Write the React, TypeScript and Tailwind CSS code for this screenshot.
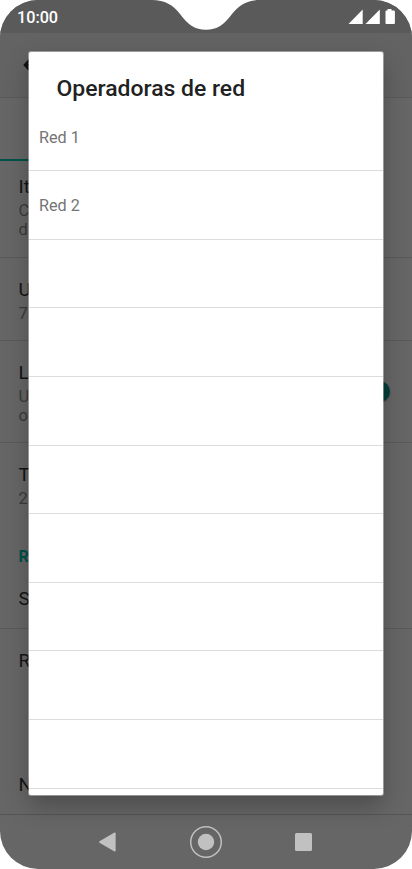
import { clsx } from 'clsx';

type Setting = {
  title: string;
  lines: string[];
  className: string;
};

const settings: Setting[] = [
  { title: 'It', lines: ['C', 'd'], className: 'h-[97px] pt-[14px] border-b' },
  { title: 'U', lines: ['7'], className: 'h-[83px] pt-5 border-b' },
  { title: 'L', lines: ['U', 'ot'], className: 'h-[102px] pt-5 border-b' },
  { title: 'T', lines: ['2'], className: 'h-[99px] pt-5' },
];

const networks = ['Red 1', 'Red 2', '', '', '', '', '', '', '', ''];

const SettingRow = ({ title, lines, className }: Setting) => (
  <div className={clsx('shrink-0 border-[#5a5a5a] pl-[18.5px]', className)}>
    <p className="text-[19px] leading-6 text-[#141414]">{title}</p>
    <div className="pt-[1.5px] text-[16.5px] leading-[19px] text-[#3b3b3b]">
      {lines.map(line => (
        <p key={line}>{line}</p>
      ))}
    </div>
  </div>
);

const StatusBar = () => (
  <div className="flex h-[33px] shrink-0 justify-between bg-[#5a5a5a] pl-[17px] pr-[16px]">
    <span className="pt-[6px] text-[16.2px] font-medium leading-6 text-white">10:00</span>
    <svg width="48" height="33" viewBox="0 0 48 33" fill="#fff">
      <path d="M0.500 24L14.700 9.500V24z" />
      <path d="M17.500 24L31.800 9.500V24z" />
      <path d="M39.500 9h4v1.500h2.400q1 0 1 1V23q0 1-1 1H38.500q-1 0-1-1V11.500q0-1 1-1h1z" />
    </svg>
  </div>
);

const NavBar = () => (
  <div className="flex h-[55px] shrink-0 items-center justify-between border-t border-[#555555] pl-[98px] pr-[100px]">
    <svg width="18" height="20" viewBox="0 0 18 20" fill="#c1c1c1">
      <path d="M1.500 9.200L16.500 .6q1.100-.4 1.100 .7v17.400q0 1.100-1.100 .7L1.500 10.800q-1-.8 0-1.600z" />
    </svg>
    <svg width="34" height="34" viewBox="0 0 34 34" className="ml-px">
      <circle cx="17" cy="17" r="15.300" fill="none" stroke="#c1c1c1" strokeWidth="1.500" />
      <circle cx="17" cy="17" r="8.200" fill="#c1c1c1" />
    </svg>
    <div className="size-[17.5px] rounded-[1.5px] bg-[#c1c1c1]" />
  </div>
);

const NetworkDialog = () => (
  <div className="absolute left-[29px] top-[52px] h-[743px] w-[354px] overflow-hidden rounded-[2px] bg-white shadow-[0_0_0_1px_rgba(255,255,255,0.4)]">
    <h1 className="h-[50.7px] pl-[27.5px] pt-[22px] text-[22.95px] font-medium leading-[30px] text-[#212121]">
      Operadoras de red
    </h1>
    {networks.map((name, i) => (
      <div
        key={i}
        className="flex h-[68.6px] items-center border-b border-[#dcdcdc] pl-[10px] pt-[3px] text-[16.2px] text-[#757575]"
      >
        {name}
      </div>
    ))}
  </div>
);

export default function App() {
  return (
    <div className="relative h-[869px] w-[412px] overflow-hidden bg-white font-['Roboto',sans-serif]">
      <div className="relative flex h-full flex-col overflow-hidden rounded-[38px] bg-[#666666]">
        <StatusBar />
        <div className="flex h-[65px] shrink-0 items-center border-b border-[#5a5a5a] bg-[#636363] pl-[23px]">
          <svg width="16" height="16" viewBox="0 0 16 16" fill="none" stroke="#111" strokeWidth="2.600">
            <path d="M6.500 3L2 8L6.500 13M2 8h14" />
          </svg>
        </div>
        <div className="flex h-[63px] shrink-0 items-end">
          <div className="h-0.5 w-1/2 bg-[#00504a]" />
        </div>
        {settings.map(s => (
          <SettingRow key={s.title} {...s} />
        ))}
        <p className="h-[42px] shrink-0 pl-[18.5px] pt-[3px] text-[16px] font-bold leading-6 text-[#00504a]">R</p>
        <p className="h-[45px] shrink-0 border-b border-[#5a5a5a] pl-[18.5px] pt-[3px] text-[19px] leading-6 text-[#141414]">S</p>
        <p className="h-[124px] shrink-0 pl-[18.5px] pt-5 text-[19px] leading-6 text-[#141414]">R</p>
        <p className="grow pl-[18.5px] pt-5 text-[19px] leading-6 text-[#141414]">N</p>
        <NavBar />

        {/* switch knob behind the dialog */}
        <div className="absolute left-[369px] top-[381px] size-[21px] rounded-full bg-[#003f39] shadow-[0_1px_2px_rgba(0,0,0,0.3)]" />
        {/* dialog shadow */}
        <div className="absolute left-[29px] top-[52px] h-[743px] w-[354px] rounded-[2px] shadow-[0_11px_24px_rgba(0,0,0,0.26),0_0_3px_rgba(0,0,0,0.15)]" />
      </div>

      {/* camera notch */}
      <svg className="absolute left-[152px] top-0" width="108" height="31" viewBox="0 0 108 31">
        <path d="M0 0C13 0 21 5 28 14C36 25 43 29.700 54 29.700S72 25 80 14C87 5 95 0 108 0z" fill="#fff" />
      </svg>

      <NetworkDialog />
    </div>
  );
}
